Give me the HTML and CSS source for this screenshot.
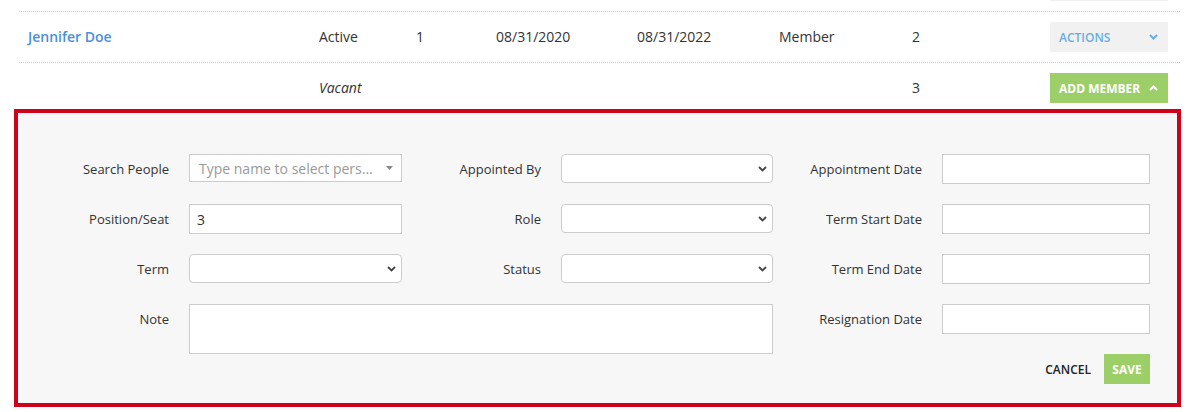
FILE: index.html
```html
<!DOCTYPE html>
<html>

<head>
  <title>Board Members</title>
  <meta name="viewport" content="width=device-width, initial-scale=1">
  <link rel="stylesheet" href="styles.css">
</head>

<body>
  <!-- member table -->
  <div class="members">
    <div class="row prev">
      <span></span><span></span><span></span><span></span><span></span><span></span><span></span><span></span>
      <span class="prev-btn"></span>
    </div>

    <div class="row">
      <span></span>
      <a class="name" href="#">Jennifer Doe</a>
      <span>Active</span>
      <span>1</span>
      <span>08/31/2020</span>
      <span>08/31/2022</span>
      <span>Member</span>
      <span>2</span>
      <button class="btn-actions">ACTIONS
        <svg width="9" height="6" viewBox="0 0 9 6"><path d="M1 1l3.5 3.5L8 1" fill="none" stroke="#6aaee0" stroke-width="2"/></svg>
      </button>
    </div>

    <div class="row last">
      <span></span>
      <span></span>
      <span class="vacant">Vacant</span>
      <span></span>
      <span></span>
      <span></span>
      <span></span>
      <span>3</span>
      <button class="btn-add">ADD MEMBER
        <svg width="9" height="6" viewBox="0 0 9 6"><path d="M1 5l3.5-3.5L8 5" fill="none" stroke="#fff" stroke-width="2"/></svg>
      </button>
    </div>
  </div>

  <!-- add member form -->
  <div class="member-form">
    <div class="form-grid">
      <label class="lbl">Search People</label>
      <div class="search">
        <span>Type name to select pers...</span>
        <svg width="7" height="4" viewBox="0 0 7 4"><path d="M0 0h7L3.5 4z" fill="#888"/></svg>
      </div>
      <label class="lbl">Appointed By</label>
      <div class="select">
        <select><option></option></select>
        <svg width="9" height="6" viewBox="0 0 9 6"><path d="M1 1l3.5 3.5L8 1" fill="none" stroke="#444" stroke-width="1.8"/></svg>
      </div>
      <label class="lbl">Appointment Date</label>
      <input type="text">

      <label class="lbl">Position/Seat</label>
      <input type="text" value="3">
      <label class="lbl">Role</label>
      <div class="select">
        <select><option></option></select>
        <svg width="9" height="6" viewBox="0 0 9 6"><path d="M1 1l3.5 3.5L8 1" fill="none" stroke="#444" stroke-width="1.8"/></svg>
      </div>
      <label class="lbl">Term Start Date</label>
      <input type="text">

      <label class="lbl">Term</label>
      <div class="select">
        <select><option></option></select>
        <svg width="9" height="6" viewBox="0 0 9 6"><path d="M1 1l3.5 3.5L8 1" fill="none" stroke="#444" stroke-width="1.8"/></svg>
      </div>
      <label class="lbl">Status</label>
      <div class="select">
        <select><option></option></select>
        <svg width="9" height="6" viewBox="0 0 9 6"><path d="M1 1l3.5 3.5L8 1" fill="none" stroke="#444" stroke-width="1.8"/></svg>
      </div>
      <label class="lbl">Term End Date</label>
      <input type="text">

      <label class="lbl">Note</label>
      <textarea class="note"></textarea>
      <label class="lbl lbl-resign">Resignation Date</label>
      <input type="text" class="resign">

      <div class="form-actions">
        <button class="btn-cancel">CANCEL</button>
        <button class="btn-save">SAVE</button>
      </div>
    </div>
  </div>
</body>

</html>
```

FILE: styles.css
```css
body {
  font-family: "Open Sans", "Liberation Sans", sans-serif;
  color: #333;
  background: #fff;
  margin: 0;
}

.members {
  padding: 0 10px 0 19px;
}

.row {
  display: grid;
  grid-template-columns: 9px 291px 97px 80px 141px 142px 133px 138px 118px;
  align-items: center;
  padding: 10px 0;
  font-size: 14px;
  border-bottom: 1px dotted #ccc;
}

/* nudge text up a hair so it lines up with the buttons */
.row > span,
.row > .name {
  padding-bottom: 2px;
}

.row.prev {
  padding: 0;
  height: 11px;
  align-items: start;
}

.row.prev > span {
  padding: 0;
}

.prev-btn {
  height: 1px;
  background: #f0f0f0;
}

.row.last {
  padding: 10px 0 6px;
  border-bottom: none;
}

.name {
  color: #4a8fdc;
  font-weight: 600;
  text-decoration: none;
}

.vacant {
  font-style: italic;
}

button {
  font-family: inherit;
  border: none;
  cursor: pointer;
}

.btn-actions,
.btn-add {
  height: 30px;
  display: flex;
  align-items: center;
  justify-content: space-between;
  padding: 0 10px 0 9px;
  font-size: 12px;
  font-weight: 600;
}

.btn-actions {
  background: #f1f1f1;
  color: #6aaee0;
}

.btn-add {
  background: #9dcf68;
  color: #fff;
  font-weight: 700;
}

.member-form {
  margin: 0 9px 0 14px;
  border: 4px solid #d0021b;
  background: #f7f7f7;
  padding: 41px 27px 19px 0;
}

.form-grid {
  display: grid;
  grid-template-columns: 171px 213px 159px 212px 169px 208px;
  grid-template-rows: repeat(5, 30px);
  row-gap: 20px;
}

.lbl {
  font-size: 13px;
  text-align: right;
  padding-right: 20px;
  align-self: center;
}

.lbl-resign {
  grid-column: 5;
  grid-row: 4;
}

.resign {
  grid-column: 6;
  grid-row: 4;
}

input,
select,
textarea {
  font-family: inherit;
  font-size: 14px;
  color: #333;
  box-sizing: border-box;
  width: 100%;
  height: 30px;
  margin: 0;
  border: 1px solid #ccc;
  background: #fff;
  border-radius: 0;
  padding: 0 7px;
}

.search {
  box-sizing: border-box;
  height: 28px;
  border: 1px solid #ccc;
  background: #fff;
  display: flex;
  align-items: center;
  justify-content: space-between;
  padding: 0 8px 0 9px;
  font-size: 14px;
  color: #999;
}

.select {
  position: relative;
}

.select select {
  appearance: none;
  height: 29px;
  border-radius: 4px;
}

.select svg {
  position: absolute;
  right: 6px;
  top: 12px;
}

.note {
  grid-column: 2 / 5;
  grid-row: 4 / 6;
  height: 50px;
  resize: none;
  padding: 6px 7px;
}

.form-actions {
  grid-column: 5 / 7;
  grid-row: 5;
  display: flex;
  justify-content: flex-end;
  align-items: center;
  gap: 13px;
}

.btn-cancel {
  background: none;
  padding: 0;
  color: #222;
  font-size: 12px;
  font-weight: 600;
}

.btn-save {
  background: #9dcf68;
  color: #fff;
  font-size: 12px;
  font-weight: 700;
  height: 30px;
  width: 46px;
  padding: 0;
}
```
